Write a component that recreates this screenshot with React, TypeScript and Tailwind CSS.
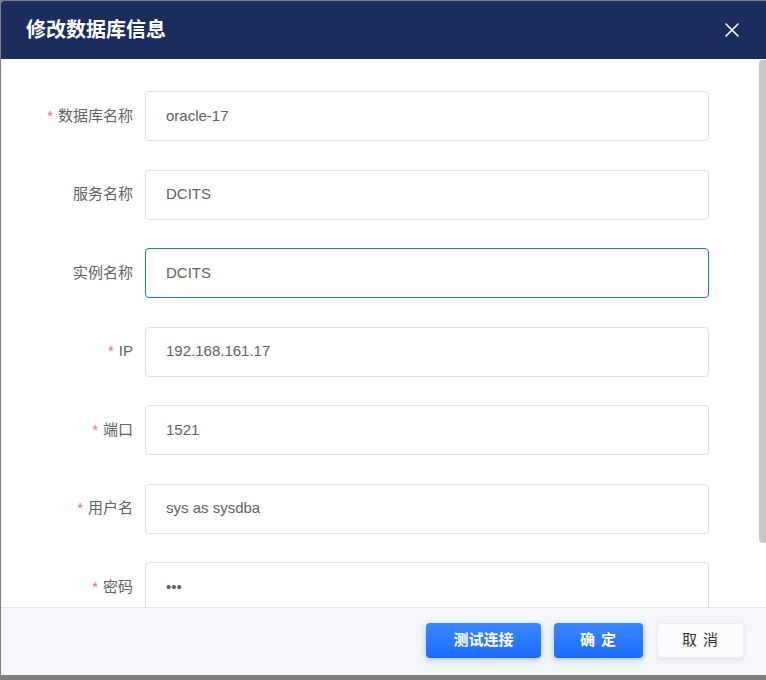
import React from "react";
import { X } from "lucide-react";

const fields = [
  { label: "数据库名称", value: "oracle-17", required: true },
  { label: "服务名称", value: "DCITS", required: false },
  { label: "实例名称", value: "DCITS", required: false, focused: true },
  { label: "IP", value: "192.168.161.17", required: true },
  { label: "端口", value: "1521", required: true },
  { label: "用户名", value: "sys as sysdba", required: true },
  { label: "密码", value: "•••", required: true },
];

const font = { fontFamily: '"Liberation Sans", "Noto Sans CJK SC", sans-serif' };

export default function App() {
  return (
    <div className="h-[680px] w-[766px] overflow-hidden bg-[#7f7f7f] pl-px pt-px" style={font}>
      <div className="flex h-[674px] flex-col overflow-hidden rounded-tl-[3px] bg-white">
        {/* Header */}
        <div className="flex h-[58px] shrink-0 items-center justify-between bg-[#1b2d5c] pl-[25px] pr-[22px]">
          <h2 className="text-[20px] font-bold text-white">修改数据库信息</h2>
          <X className="h-[24px] w-[24px] text-white" strokeWidth={1.6} />
        </div>

        {/* Body */}
        <div className="flex min-h-0 flex-1 overflow-hidden">
          <div className="flex-1 pt-[32px]">
            {fields.map((f) => (
              <div key={f.label} className="mb-[28.5px] flex items-center">
                <label className="w-[132px] text-right text-[15px] text-[#606266]">
                  {f.required && <span className="mr-[5px] text-[#f56c6c]">*</span>}
                  {f.label}
                </label>
                <div
                  className={`ml-[12px] flex h-[50px] w-[564px] items-center rounded-[4px] border bg-white pl-[20px] text-[15px] text-[#606266] ${
                    f.focused ? "border-[#1e6fff]" : "border-[#dcdfe6]"
                  }`}
                >
                  {f.value}
                </div>
              </div>
            ))}
          </div>
          <div className="w-[7px] shrink-0 pt-px">
            <div className="h-[483px] rounded-bl-[4px] rounded-tl-[4px] bg-[#c8c8cc]" />
          </div>
        </div>

        {/* Footer */}
        <div className="flex h-[68px] shrink-0 items-start justify-end gap-[12px] border-t border-[#e4e7ed] bg-[#f4f6fa] pr-[22px] pt-[15px]">
          <button className="mr-px h-[35px] w-[115px] rounded-[4px] bg-gradient-to-b from-[#3b87ff] to-[#1c6bff] text-[15px] font-bold text-white shadow-[0_2px_6px_rgba(30,111,255,0.35)]">
            测试连接
          </button>
          <button className="h-[35px] w-[89px] rounded-[4px] bg-gradient-to-b from-[#3b87ff] to-[#1c6bff] text-[15px] font-bold tracking-[1px] text-white shadow-[0_2px_6px_rgba(30,111,255,0.35)]">
            确 定
          </button>
          <button className="ml-[2px] h-[35px] w-[87px] rounded-[4px] border border-[#eceef3] bg-[#fafbfd] text-[15px] tracking-[1px] text-[#333] shadow-[0_2px_4px_rgba(0,0,0,0.08)]">
            取 消
          </button>
        </div>
      </div>
    </div>
  );
}
